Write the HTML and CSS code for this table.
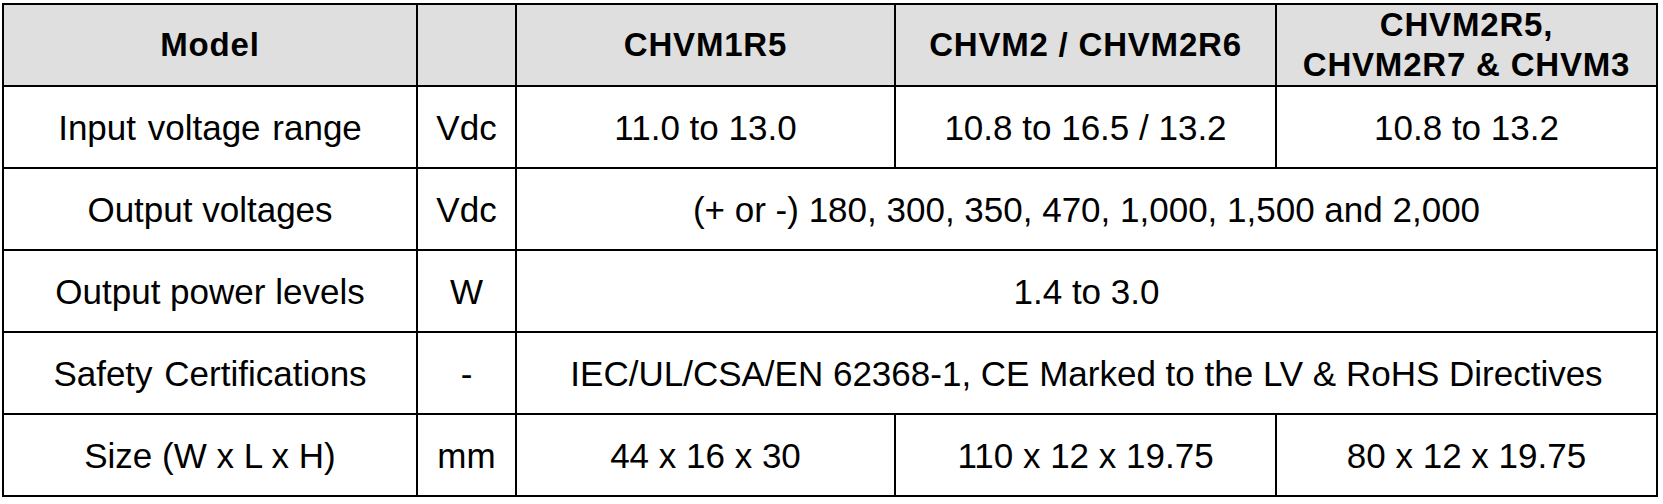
FILE: index.html
```html
<!DOCTYPE html>
<html>
<head>
<meta charset="utf-8">
<link rel="stylesheet" href="styles.css">
</head>
<body>
<table class="spec">
  <colgroup>
    <col class="c-label">
    <col class="c-unit">
    <col class="c-a">
    <col class="c-b">
    <col class="c-c">
  </colgroup>
  <thead>
    <tr class="head">
      <th>Model</th>
      <th></th>
      <th>CHVM1R5</th>
      <th>CHVM2 / CHVM2R6</th>
      <th class="two">CHVM2R5,<br>CHVM2R7 &amp; CHVM3</th>
    </tr>
  </thead>
  <tbody>
    <tr>
      <td class="wide">Input voltage range</td>
      <td>Vdc</td>
      <td>11.0 to 13.0</td>
      <td>10.8 to 16.5 / 13.2</td>
      <td>10.8 to 13.2</td>
    </tr>
    <tr>
      <td>Output voltages</td>
      <td>Vdc</td>
      <td colspan="3">(+ or -) 180, 300, 350, 470, 1,000, 1,500 and 2,000</td>
    </tr>
    <tr>
      <td>Output power levels</td>
      <td>W</td>
      <td colspan="3">1.4 to 3.0</td>
    </tr>
    <tr>
      <td class="wide">Safety Certifications</td>
      <td>-</td>
      <td colspan="3">IEC/UL/CSA/EN 62368-1, CE Marked to the LV &amp; RoHS Directives</td>
    </tr>
    <tr class="last">
      <td>Size (W x L x H)</td>
      <td>mm</td>
      <td>44 x 16 x 30</td>
      <td>110 x 12 x 19.75</td>
      <td>80 x 12 x 19.75</td>
    </tr>
  </tbody>
</table>
</body>
</html>
```

FILE: styles.css
```css
html, body {
  margin: 0;
  padding: 0;
  background: #ffffff;
}
body {
  padding: 3px 0 0 2px;
  font-family: "Liberation Sans", Arial, sans-serif;
  color: #000;
}
.spec {
  border-collapse: collapse;
  table-layout: fixed;
  width: 1656px;
}
.c-label { width: 414px; }
.c-unit { width: 99px; }
.c-a { width: 379px; }
.c-b { width: 381px; }
.c-c { width: 381px; }
.spec th, .spec td {
  border: 2px solid #000;
  text-align: center;
  vertical-align: middle;
  padding: 2px 0 0 0;
  font-size: 35px;
  line-height: 38px;
  height: 78px;
}
.spec th {
  background: #dfdfdf;
  font-weight: bold;
  font-size: 33px;
  letter-spacing: 0.8px;
  padding: 0;
  height: 80px;
}
.spec th.two {
  line-height: 40px;
}
.wide {
  word-spacing: 2px;
}
```
